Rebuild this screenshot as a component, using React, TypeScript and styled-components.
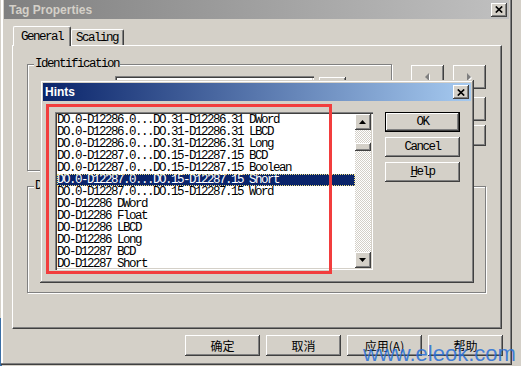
import React from 'react';
import styled, { createGlobalStyle, css } from 'styled-components';

const face = '#d4d0c8';
const shadow = '#808080';
const dark = '#404040';

const GlobalStyle = createGlobalStyle`
  html, body {
    margin: 0;
    padding: 0;
    background: ${face};
  }
  body {
    width: 521px;
    height: 366px;
    overflow: hidden;
  }
`;

const monoText = css`
  font-family: 'Liberation Mono', 'Courier New', monospace;
  font-size: 12.5px;
  letter-spacing: -1.5px;
  color: #000;
`;

const cjkText = css`
  font-family: 'Noto Sans CJK SC', 'Liberation Sans', sans-serif;
  font-size: 12px;
  color: #000;
`;

const raisedButton = css`
  background: ${face};
  box-shadow: inset -1px -1px ${dark}, inset 1px 1px #fff, inset -2px -2px ${shadow}, inset 2px 2px ${face};
`;

const Desktop = styled.div`
  position: relative;
  width: 521px;
  height: 366px;
  overflow: hidden;
  background: ${face};
`;

const DesktopPeek = styled.div`
  position: absolute;
  left: 0;
  top: 318px;
  width: 2px;
  height: 48px;
  background: #3a6ea5;
`;

const Window = styled.div`
  position: absolute;
  left: 1px;
  top: 0;
  width: 511px;
  height: 365px;
  box-sizing: border-box;
  display: flex;
  flex-direction: column;
  padding: 0 3px 3px;
  background: ${face};
  box-shadow: inset -1px -1px ${dark}, inset -2px -2px ${shadow}, inset 2px 0 #fff;
`;

const Caption = styled.div<{ $active?: boolean }>`
  display: flex;
  align-items: center;
  justify-content: space-between;
  flex-shrink: 0;
  height: ${({ $active }) => ($active ? 18 : 19)}px;
  padding: 0 2px 0 ${({ $active }) => ($active ? 2 : 5)}px;
  background: ${({ $active }) =>
    $active ? 'linear-gradient(to right, #0a246a, #a6caf0)' : 'linear-gradient(to right, #808080, #c0c0c0)'};
  color: ${({ $active }) => ($active ? '#fff' : face)};
  font: bold 12px 'Liberation Sans', Arial, sans-serif;
`;

const CloseButton = styled.div`
  ${raisedButton};
  width: 16px;
  height: 14px;
  display: flex;
  align-items: center;
  justify-content: center;
`;

const CloseGlyph = () => (
  <svg width="8" height="7" viewBox="0 0 8 7">
    <path d="M0.8 0.5 L7.2 6.5 M7.2 0.5 L0.8 6.5" stroke="#000" strokeWidth="1.7" fill="none" />
  </svg>
);

const Triangle = ({ dir, w, h, color = '#000', etched = false }: { dir: 'up' | 'down' | 'left' | 'right'; w: number; h: number; color?: string; etched?: boolean }) => {
  const pts = {
    up: `0,${h} ${w},${h} ${w / 2},0`,
    down: `0,0 ${w},0 ${w / 2},${h}`,
    left: `${w},0 ${w},${h} 0,${h / 2}`,
    right: `0,0 0,${h} ${w},${h / 2}`,
  }[dir];
  return (
    <svg width={w + 1} height={h + 1} viewBox={`0 0 ${w + 1} ${h + 1}`}>
      {etched && <polygon points={pts} fill="#fff" transform="translate(1 1)" />}
      <polygon points={pts} fill={color} />
    </svg>
  );
};

const WindowBody = styled.div`
  display: flex;
  flex-direction: column;
  padding: 7px 0 0 8px;
`;

const TabStrip = styled.div`
  display: flex;
  align-items: flex-end;
  height: 19px;
  margin-left: 1px;
  position: relative;
  z-index: 1;
`;

const Tab = styled.div<{ $active?: boolean }>`
  ${monoText};
  box-sizing: border-box;
  display: flex;
  align-items: center;
  height: ${({ $active }) => ($active ? 20 : 16)}px;
  margin-bottom: ${({ $active }) => ($active ? -1 : 0)}px;
  padding: 0 ${({ $active }) => ($active ? 7 : 5)}px 0 ${({ $active }) => ($active ? 7 : 4)}px;
  background: ${face};
  border-top: 1px solid #fff;
  border-left: 1px solid #fff;
  border-right: 1px solid ${dark};
  border-radius: 2px 2px 0 0;
  box-shadow: inset -1px 0 ${shadow};
`;

const TabPanel = styled.div`
  box-sizing: border-box;
  width: 490px;
  height: 284px;
  padding: 12px 0 0 14px;
  border-top: 1px solid #fff;
  border-left: 1px solid #fff;
  border-right: 1px solid ${dark};
  border-bottom: 1px solid ${dark};
  box-shadow: inset -1px -1px ${shadow};
`;

const TopRow = styled.div`
  display: flex;
  align-items: flex-start;
`;

const GroupBox = styled.fieldset<{ $w: number; $h: number; $gap?: number }>`
  box-sizing: border-box;
  width: ${({ $w }) => $w}px;
  height: ${({ $h }) => $h}px;
  min-width: 0;
  margin: ${({ $gap }) => $gap ?? 0}px 0 0;
  padding: 0 0 0 6px;
  border: 1px solid ${shadow};
  box-shadow: inset 1px 1px #fff, 1px 1px #fff;
`;

const Legend = styled.legend`
  ${monoText};
  line-height: 12px;
  padding: 0 1px;
  background: ${face};
`;

const FieldRow = styled.div`
  display: flex;
  align-items: flex-start;
  gap: 5px;
  margin: 6px 0 0 81px;
`;

const Edit = styled.div`
  width: 199px;
  height: 21px;
  background: #fff;
  box-shadow: inset 1px 1px ${shadow}, inset 2px 2px ${dark}, inset -1px -1px #fff, inset -2px -2px ${face};
`;

const SmallButton = styled.div`
  ${raisedButton};
  width: 27px;
  height: 20px;
  margin-top: 1px;
`;

const SideColumn = styled.div`
  display: flex;
  flex-direction: column;
  width: 75px;
  margin: 7px 0 0 19px;
`;

const ArrowRow = styled.div`
  display: flex;
  gap: 9px;
`;

const NavButton = styled.div`
  ${raisedButton};
  width: 33px;
  height: 24px;
  display: flex;
  align-items: center;
  justify-content: center;
`;

const SideButton = styled.div<{ $h: number; $gap: number }>`
  ${raisedButton};
  height: ${({ $h }) => $h}px;
  margin-top: ${({ $gap }) => $gap}px;
`;

const ButtonRow = styled.div`
  display: flex;
  justify-content: flex-end;
  gap: 6px;
  margin-top: 6px;
  padding-right: 6px;
`;

const PushButton = styled.div<{ $default?: boolean; $cjk?: boolean }>`
  ${({ $cjk }) => ($cjk ? cjkText : monoText)};
  box-sizing: border-box;
  width: 75px;
  height: ${({ $cjk }) => ($cjk ? 21 : 20)}px;
  display: flex;
  align-items: center;
  justify-content: center;
  ${raisedButton};
  ${({ $default }) =>
    $default &&
    css`
      border: 1px solid #000;
    `}
`;

const Dialog = styled.div`
  position: absolute;
  left: 40px;
  top: 80px;
  width: 434px;
  height: 203px;
  box-sizing: border-box;
  padding: 3px;
  display: flex;
  flex-direction: column;
  background: ${face};
  box-shadow: inset -1px -1px ${dark}, inset 1px 1px ${face}, inset -2px -2px ${shadow}, inset 2px 2px #fff;
`;

const DialogBody = styled.div`
  display: flex;
  align-items: flex-start;
  gap: 12px;
  padding: 11px 0 0 12px;
`;

const ListBox = styled.div`
  box-sizing: border-box;
  width: 318px;
  height: 158px;
  padding: 2px;
  display: flex;
  background: #fff;
  box-shadow: inset 1px 1px ${shadow}, inset 2px 2px ${dark}, inset -1px -1px #fff, inset -2px -2px ${face};
`;

const ListItems = styled.div`
  flex: 1;
  overflow: hidden;
`;

const ListRow = styled.div<{ $selected?: boolean }>`
  ${monoText};
  box-sizing: border-box;
  height: 12px;
  line-height: 12px;
  white-space: pre;
  ${({ $selected }) =>
    $selected &&
    css`
      background: #0a246a;
      color: #fff;
      outline: 1px dotted #f0e080;
      outline-offset: -1px;
    `}
`;

const ScrollBar = styled.div`
  width: 16px;
  display: flex;
  flex-direction: column;
`;

const ScrollButton = styled.div`
  ${raisedButton};
  flex-shrink: 0;
  height: 16px;
  display: flex;
  align-items: center;
  justify-content: center;
`;

const ScrollTrack = styled.div`
  flex: 1;
  background: repeating-conic-gradient(${face} 0 25%, #fff 0 50%) 0 0 / 2px 2px;
`;

const ScrollThumb = styled.div`
  ${raisedButton};
  height: 8px;
  margin-top: 13px;
`;

const DialogButtons = styled.div`
  display: flex;
  flex-direction: column;
  gap: 5px;
`;

const Annotation = styled.div`
  position: absolute;
  left: 46px;
  top: 104px;
  width: 286px;
  height: 170px;
  box-sizing: border-box;
  border: 3px solid #f23d3d;
`;

const Watermark = styled.div`
  position: absolute;
  left: 363px;
  top: 343px;
  font: 22px/22px 'Liberation Sans', Arial, sans-serif;
  color: rgba(38, 110, 215, 0.85);
  white-space: nowrap;
`;

const hints = [
  'DO.0-D12286.0...DO.31-D12286.31 DWord',
  'DO.0-D12286.0...DO.31-D12286.31 LBCD',
  'DO.0-D12286.0...DO.31-D12286.31 Long',
  'DO.0-D12287.0...DO.15-D12287.15 BCD',
  'DO.0-D12287.0...DO.15-D12287.15 Boolean',
  'DO.0-D12287.0...DO.15-D12287.15 Short',
  'DO.0-D12287.0...DO.15-D12287.15 Word',
  'DO-D12286 DWord',
  'DO-D12286 Float',
  'DO-D12286 LBCD',
  'DO-D12286 Long',
  'DO-D12287 BCD',
  'DO-D12287 Short',
];

const App = () => (
  <Desktop>
    <GlobalStyle />
    <DesktopPeek />
    <Window>
      <Caption>
        <span>Tag Properties</span>
        <CloseButton>
          <CloseGlyph />
        </CloseButton>
      </Caption>
      <WindowBody>
        <TabStrip>
          <Tab $active>General</Tab>
          <Tab>Scaling</Tab>
        </TabStrip>
        <TabPanel>
          <TopRow>
            <GroupBox $w={365} $h={113}>
              <Legend>Identification</Legend>
              <FieldRow>
                <Edit />
                <SmallButton />
              </FieldRow>
            </GroupBox>
            <SideColumn>
              <ArrowRow>
                <NavButton>
                  <Triangle dir="left" w={4} h={8} color={shadow} etched />
                </NavButton>
                <NavButton>
                  <Triangle dir="right" w={4} h={8} color={shadow} etched />
                </NavButton>
              </ArrowRow>
              <SideButton $h={24} $gap={8} />
              <SideButton $h={21} $gap={4} />
            </SideColumn>
          </TopRow>
          <GroupBox $w={459} $h={113} $gap={9}>
            <Legend>Data Type</Legend>
          </GroupBox>
        </TabPanel>
        <ButtonRow>
          <PushButton $cjk>确定</PushButton>
          <PushButton $cjk>取消</PushButton>
          <PushButton $cjk>应用(A)</PushButton>
          <PushButton $cjk>帮助</PushButton>
        </ButtonRow>
      </WindowBody>
    </Window>

    <Dialog>
      <Caption $active>
        <span>Hints</span>
        <CloseButton>
          <CloseGlyph />
        </CloseButton>
      </Caption>
      <DialogBody>
        <ListBox>
          <ListItems>
            {hints.map((text, i) => (
              <ListRow key={i} $selected={i === 5}>
                {text}
              </ListRow>
            ))}
          </ListItems>
          <ScrollBar>
            <ScrollButton>
              <Triangle dir="up" w={7} h={4} />
            </ScrollButton>
            <ScrollTrack>
              <ScrollThumb />
            </ScrollTrack>
            <ScrollButton>
              <Triangle dir="down" w={7} h={4} />
            </ScrollButton>
          </ScrollBar>
        </ListBox>
        <DialogButtons>
          <PushButton $default>OK</PushButton>
          <PushButton>Cancel</PushButton>
          <PushButton>
            <u>H</u>elp
          </PushButton>
        </DialogButtons>
      </DialogBody>
    </Dialog>

    <Annotation />
    <Watermark>www.eleok.com</Watermark>
  </Desktop>
);

export default App;
